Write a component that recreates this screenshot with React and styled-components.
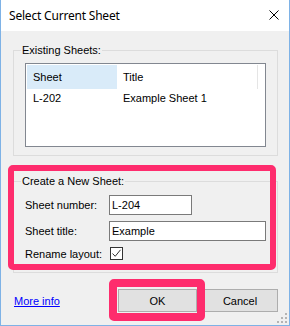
import React from 'react';
import styled, { createGlobalStyle } from 'styled-components';

const GlobalStyle = createGlobalStyle`
  html, body {
    margin: 0;
    padding: 0;
    background: #ffffff;
  }
  * {
    box-sizing: border-box;
  }
`;

export default function App() {
  return (
    <>
      <GlobalStyle />
      <Window>
        <TitleBar>
          <Title>Select Current Sheet</Title>
          <CloseIcon width="10" height="10" viewBox="0 0 10 10">
            <path d="M0.5 0.5 L9.5 9.5 M9.5 0.5 L0.5 9.5" stroke="#000" strokeWidth="1" />
          </CloseIcon>
        </TitleBar>

        <Body>
          <Group $top={19} $height={106}>
            <Legend>Existing Sheets:</Legend>
            <ListView>
              <ListHeader>
                <HeaderCell $width={90} $selected>Sheet</HeaderCell>
                <HeaderCell $width={140}>Title</HeaderCell>
              </ListHeader>
              <ListRow>
                <Cell $width={90}>L-202</Cell>
                <Cell>Example Sheet 1</Cell>
              </ListRow>
            </ListView>
          </Group>

          <Group $top={25} $height={92} $pad={13}>
            <Legend>Create a New Sheet:</Legend>
            <FieldRow>
              <Label>Sheet number:</Label>
              <TextBox $width={83}>L-204</TextBox>
            </FieldRow>
            <FieldRow>
              <Label>Sheet title:</Label>
              <TextBox $width={157}>Example</TextBox>
            </FieldRow>
            <FieldRow $height={13}>
              <Label>Rename layout:</Label>
              <CheckBox>
                <svg width="11" height="11" viewBox="0 0 11 11">
                  <path d="M1.5 5.5 L4.2 8.3 L9.5 1.8" fill="none" stroke="#333" strokeWidth="1" />
                </svg>
              </CheckBox>
            </FieldRow>
            <Highlight $inset="-17px 1px 2px -6px" $width={6} />
          </Group>

          <ButtonBar>
            <MoreInfo href="#">More info</MoreInfo>
            <ButtonWrap>
              <Button $width={79}>OK</Button>
              <Highlight $inset="-10px -8px -9px -9px" $width={8} />
            </ButtonWrap>
            <Button $width={76}>Cancel</Button>
          </ButtonBar>
        </Body>

        <Grip width="10" height="10" viewBox="0 0 10 10">
          <rect x="8" y="0" width="2" height="2" />
          <rect x="4" y="4" width="2" height="2" />
          <rect x="8" y="4" width="2" height="2" />
          <rect x="0" y="8" width="2" height="2" />
          <rect x="4" y="8" width="2" height="2" />
          <rect x="8" y="8" width="2" height="2" />
        </Grip>
      </Window>
    </>
  );
}

/** window frame */
const Window = styled.div`
  position: relative;
  width: 290px;
  height: 326px;
  display: flex;
  flex-direction: column;
  border: 1px solid #7eb2e6;
  border-top: none;
  font-family: 'Liberation Sans', Arial, sans-serif;
  font-size: 11px;
  color: #000;
`;

const TitleBar = styled.div`
  height: 31px;
  flex: none;
  display: flex;
  align-items: center;
  justify-content: space-between;
  padding: 0 10px 0 8px;
  background: #ffffff;
`;

const Title = styled.span`
  font-family: 'Segoe UI', 'Noto Sans', sans-serif;
  font-size: 12px;
  letter-spacing: -0.2px;
  margin-top: -1px;
`;

const CloseIcon = styled.svg`
  display: block;
  margin-top: -1px;
`;

const Body = styled.div`
  flex: 1;
  display: flex;
  flex-direction: column;
  padding: 0 11px 0 12px;
  background: #f0f0f0;
`;

/** group box with a caption on its top line */
const Group = styled.div`
  position: relative;
  margin-top: ${p => p.$top}px;
  width: 265px;
  height: ${p => p.$height}px;
  border: 1px solid #dcdcdc;
  padding: ${p => p.$pad || 12}px 11px 0 11px;
  display: flex;
  flex-direction: column;
  gap: 6px;
`;

const Legend = styled.span`
  position: absolute;
  top: -7px;
  left: 7px;
  padding: 0 1px;
  line-height: 13px;
  background: #f0f0f0;
`;

const ListView = styled.div`
  width: 241px;
  height: 84px;
  border: 1px solid #828790;
  background: #ffffff;
  padding: 1px;
`;

const ListHeader = styled.div`
  display: flex;
  height: 24px;
  width: 231px;
  border-right: 1px solid #e5e5e5;
`;

const HeaderCell = styled.div`
  width: ${p => p.$width}px;
  padding-left: 6px;
  display: flex;
  align-items: center;
  background: ${p => (p.$selected ? '#d9ebf9' : '#ffffff')};
`;

const ListRow = styled.div`
  display: flex;
  height: 18px;
  align-items: center;
`;

const Cell = styled.div`
  width: ${p => (p.$width ? `${p.$width}px` : 'auto')};
  padding-left: 6px;
`;

const FieldRow = styled.div`
  display: flex;
  align-items: center;
  height: ${p => p.$height || 20}px;
`;

const Label = styled.span`
  width: 84px;
  flex: none;
`;

const TextBox = styled.div`
  width: ${p => p.$width}px;
  height: 20px;
  border: 1px solid #7a7a7a;
  background: #ffffff;
  padding-left: 2px;
  display: flex;
  align-items: center;
`;

const CheckBox = styled.div`
  width: 13px;
  height: 13px;
  margin-left: 1px;
  border: 1px solid #333333;
  background: #ffffff;

  svg {
    display: block;
  }
`;

/** pink annotation frame drawn over the dialog */
const Highlight = styled.div`
  position: absolute;
  inset: ${p => p.$inset};
  border: ${p => p.$width}px solid #fe2c6d;
  border-radius: 5px;
  pointer-events: none;
`;

const ButtonBar = styled.div`
  margin-top: 16px;
  display: flex;
  align-items: center;
  height: 23px;
`;

const MoreInfo = styled.a`
  color: #0000ff;
  text-decoration: underline;
  margin-left: 1px;
  margin-right: auto;
`;

const ButtonWrap = styled.div`
  position: relative;
  margin-right: 5px;
`;

const Button = styled.div`
  width: ${p => p.$width}px;
  height: 23px;
  display: flex;
  align-items: center;
  justify-content: center;
  background: #e1e1e1;
  border: 1px solid #adadad;
`;

const Grip = styled.svg`
  position: absolute;
  right: 2px;
  bottom: 2px;
  fill: #b4b4b4;
`;
